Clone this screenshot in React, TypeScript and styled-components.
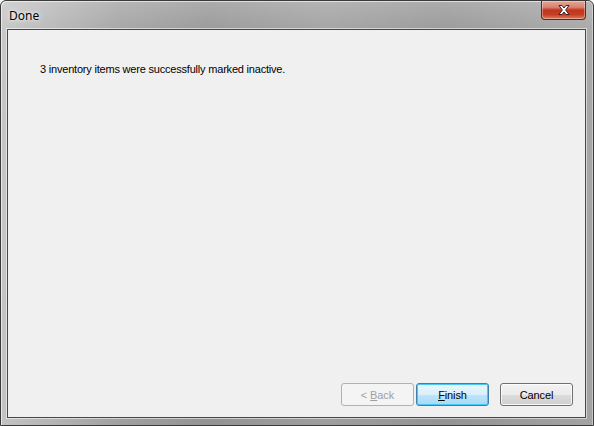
import React from "react";
import styled, { createGlobalStyle } from "styled-components";

const Global = createGlobalStyle`
  html, body { margin: 0; padding: 0; background: #ffffff; }
  body { width: 594px; height: 426px; overflow: hidden; }
`;

const Window = styled.div`
  box-sizing: border-box;
  width: 594px;
  height: 426px;
  border: 1px solid #3a3a3a;
  border-radius: 6px 6px 0 0;
  background:
    linear-gradient(90deg, rgba(255,255,255,0.45) 0%, rgba(255,255,255,0.12) 20%, rgba(255,255,255,0) 35%, rgba(255,255,255,0.1) 55%, rgba(255,255,255,0) 75%, rgba(255,255,255,0.15) 100%),
    linear-gradient(180deg, #acacac 0px, #9c9c9c 28px, #979797 120px, #939393 100%);
  display: flex;
  flex-direction: column;
  padding: 0 7px 7px 6px;
  font-family: "Liberation Sans", Arial, sans-serif;
  box-shadow: inset 1px 1px 0 rgba(255,255,255,0.6), inset -1px 0 0 rgba(255,255,255,0.4);
`;

const TitleBar = styled.div`
  height: 28px;
  display: flex;
  align-items: flex-start;
  justify-content: space-between;
`;

const Title = styled.div`
  font-family: "Noto Sans", "Open Sans", sans-serif;
  font-size: 12px;
  color: #000;
  padding: 6px 0 0 2px;
  text-shadow: 0 0 6px rgba(255,255,255,0.9), 0 0 3px rgba(255,255,255,0.9);
`;

const CloseButton = styled.div`
  width: 45px;
  height: 19px;
  box-sizing: border-box;
  border: 1px solid #5a2a22;
  border-top: none;
  border-radius: 0 0 4px 4px;
  background: linear-gradient(180deg, #e7a596 0%, #d9826f 35%, #c2351e 50%, #c43c24 75%, #de7e5e 100%);
  box-shadow: inset 0 0 0 1px rgba(255,255,255,0.35);
  display: flex;
  align-items: center;
  justify-content: center;
`;

const Client = styled.div`
  flex: 1;
  box-sizing: border-box;
  border: 1px solid #474747;
  outline: 1px solid rgba(255,255,255,0.55);
  background: #f0f0f0;
  display: flex;
  flex-direction: column;
  justify-content: space-between;
  padding: 33px 12px 11px 32px;
`;

const Message = styled.div`
  font-size: 11px;
  line-height: 13px;
  letter-spacing: -0.2px;
  color: #000;
`;

const Footer = styled.div`
  display: flex;
  justify-content: flex-end;
  align-items: center;
`;

type BtnKind = "disabled" | "default" | "normal";

const Button = styled.div<{ $kind: BtnKind; $gap: number }>`
  box-sizing: border-box;
  width: 73px;
  height: 23px;
  margin-left: ${(p) => p.$gap}px;
  border-radius: 3px;
  display: flex;
  align-items: center;
  justify-content: center;
  font-size: 11px;
  letter-spacing: -0.1px;
  color: ${(p) => (p.$kind === "disabled" ? "#a0a0a0" : "#000")};
  border: 1px solid
    ${(p) =>
      p.$kind === "disabled" ? "#adb2b5" : p.$kind === "default" ? "#3c7fb1" : "#707070"};
  background: ${(p) =>
    p.$kind === "disabled"
      ? "#f4f4f4"
      : p.$kind === "default"
      ? "linear-gradient(180deg, #eaf6fd 0%, #d9f0fc 50%, #bee6fd 50%, #a7d9f5 100%)"
      : "linear-gradient(180deg, #f2f2f2 0%, #ebebeb 50%, #dddddd 50%, #cfcfcf 100%)"};
  box-shadow: ${(p) =>
    p.$kind === "default"
      ? "inset 0 0 0 1px #48c8f5"
      : p.$kind === "normal"
      ? "inset 0 0 0 1px rgba(255,255,255,0.8)"
      : "none"};
  u { text-decoration: underline; }
`;

export default function App() {
  return (
    <>
      <Global />
      <Window>
        <TitleBar>
          <Title>Done</Title>
          <CloseButton>
            <svg width="14" height="12" viewBox="0 0 14 12">
              <path
                d="M2 1.5 L5 1.5 L7 4 L9 1.5 L12 1.5 L8.7 6 L12 10.5 L9 10.5 L7 8 L5 10.5 L2 10.5 L5.3 6 Z"
                fill="#ffffff"
                stroke="#3b2320"
                strokeWidth="1"
                strokeLinejoin="round"
              />
            </svg>
          </CloseButton>
        </TitleBar>
        <Client>
          <Message>3 inventory items were successfully marked inactive.</Message>
          <Footer>
            <Button $kind="disabled" $gap={0}>
              <span>
                &lt; <u>B</u>ack
              </span>
            </Button>
            <Button $kind="default" $gap={2}>
              <span>
                <u>F</u>inish
              </span>
            </Button>
            <Button $kind="normal" $gap={11}>
              <span>Cancel</span>
            </Button>
          </Footer>
        </Client>
      </Window>
    </>
  );
}
